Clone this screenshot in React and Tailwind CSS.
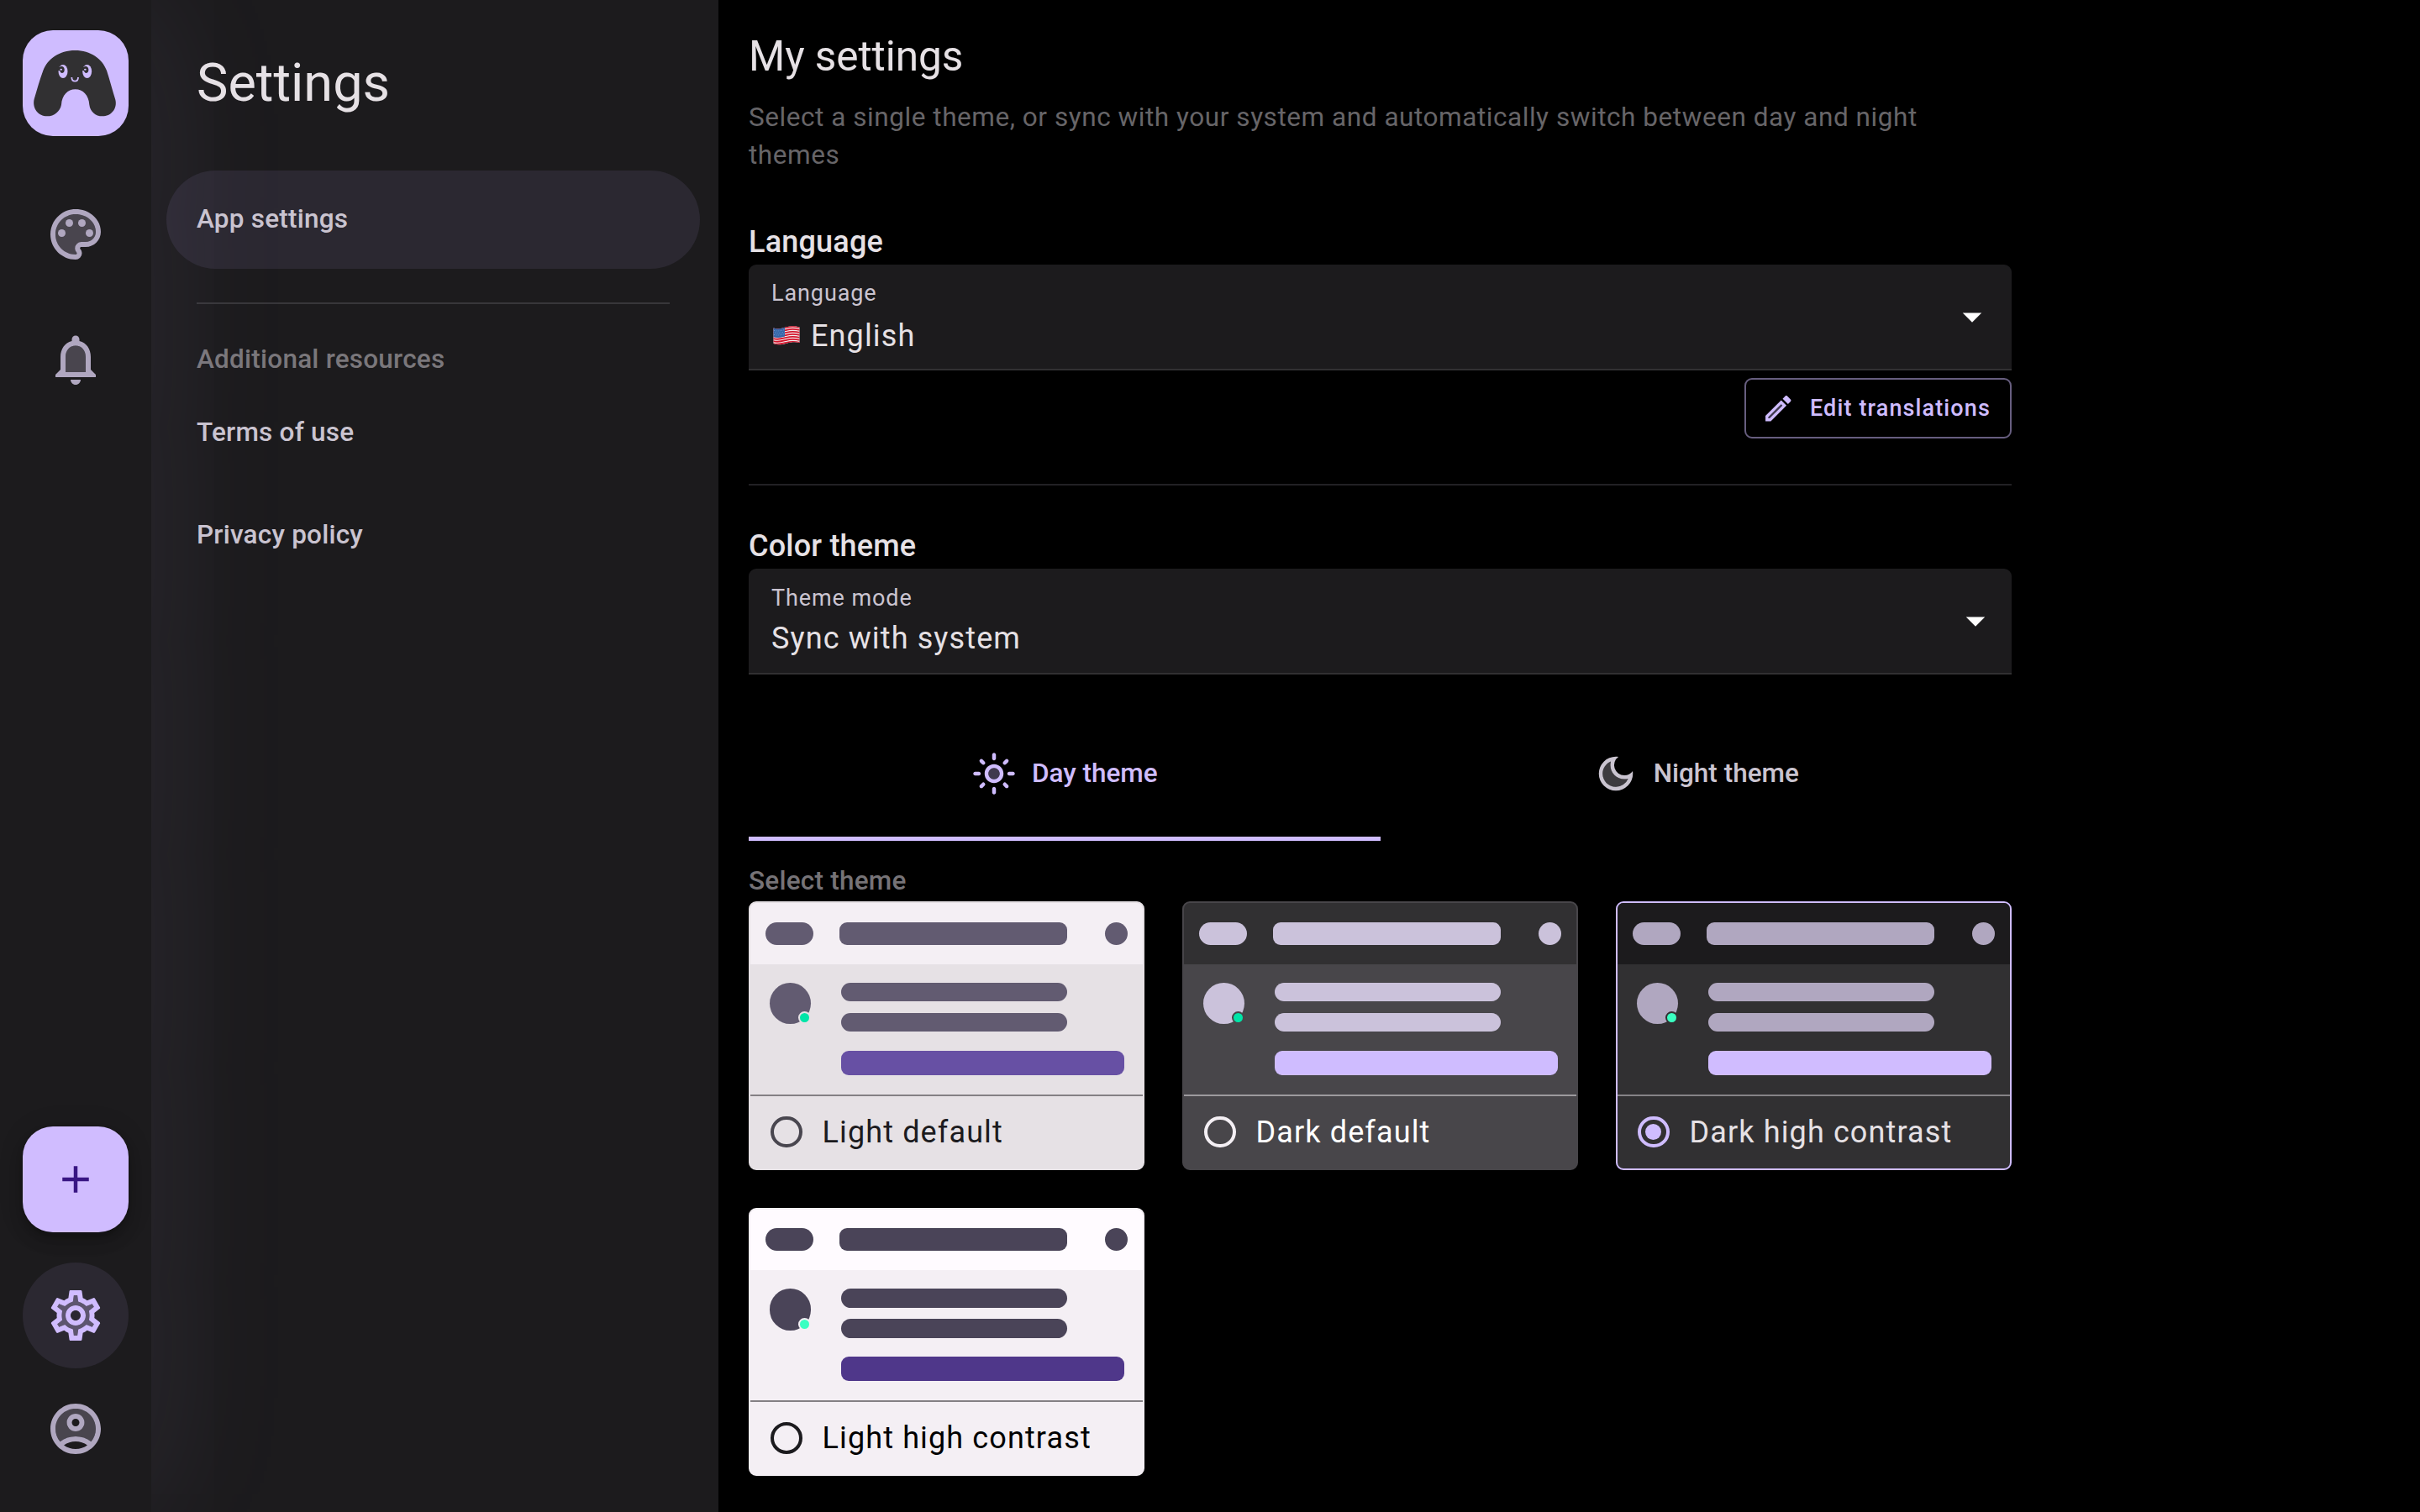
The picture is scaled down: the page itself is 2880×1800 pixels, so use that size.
import React from 'react';
import clsx from 'clsx';
import {
  MdOutlinePalette,
  MdOutlineNotifications,
  MdOutlineSettings,
  MdOutlineAccountCircle,
  MdOutlineLightMode,
  MdOutlineDarkMode,
  MdOutlineEdit,
  MdAdd,
  MdArrowDropDown,
} from 'react-icons/md';

// tinted inner layers drawn under the outlined icons
const tints = {
  palette:
    'M12 4c-4.41 0-8 3.59-8 8s3.59 8 8 8c.28 0 .5-.22.5-.5 0-.16-.08-.28-.14-.35-.41-.46-.63-1.05-.63-1.65 0-1.38 1.12-2.5 2.5-2.5H16c2.21 0 4-1.79 4-4 0-3.86-3.59-7-8-7z',
  bell: 'M12 6.5c-2.49 0-4 2.02-4 4.5v6h8v-6c0-2.48-1.51-4.5-4-4.5z',
  gear: 'M19.28 8.6l-.7-1.21-1.27.51-1.06.43-.91-.7c-.39-.3-.8-.54-1.23-.71l-1.06-.43-.16-1.13L12.7 4h-1.4l-.19 1.35-.16 1.13-1.06.44c-.41.17-.82.41-1.25.73l-.9.68-1.05-.42-1.27-.52-.7 1.21 1.08.84.89.7-.14 1.13c-.03.3-.05.53-.05.73s.02.43.05.73l.14 1.13-.89.7-1.08.84.7 1.21 1.27-.51 1.06-.43.91.7c.39.3.8.54 1.23.71l1.06.43.16 1.13.19 1.36h1.39l.19-1.35.16-1.13 1.06-.43c.41-.17.82-.41 1.25-.73l.9-.68 1.04.42 1.27.51.7-1.21-1.08-.84-.89-.7.14-1.13c.04-.31.05-.52.05-.73 0-.21-.02-.43-.05-.73l-.14-1.13.89-.7 1.1-.84zM12 16c-2.21 0-4-1.79-4-4s1.79-4 4-4 4 1.79 4 4-1.79 4-4 4z',
  account:
    'M5.86 17.12C4.7 15.73 4 13.95 4 12c0-4.42 3.58-8 8-8s8 3.58 8 8c0 1.95-.7 3.73-1.86 5.12C16.45 15.8 14.32 15 12 15s-4.45.8-6.14 2.12zM12 6a3.5 3.5 0 1 0 0 7 3.5 3.5 0 0 0 0-7z',
  sun: 'M12 9a3 3 0 1 0 0 6 3 3 0 0 0 0-6z',
  moon: 'M9.37 5.51A7.35 7.35 0 0 0 9.1 7.5c0 4.08 3.32 7.4 7.4 7.4.68 0 1.35-.09 1.99-.27A7.014 7.014 0 0 1 12 19c-3.86 0-7-3.14-7-7 0-2.93 1.81-5.45 4.37-6.49z',
  pencil: 'M5 18.08V19h.92l9.06-9.06-.92-.92z',
};

const themes = [
  {
    name: 'Light default',
    card: 'bg-[#e6e1e5] border-[#e6e1e5]',
    header: 'bg-[#f4eff4]',
    shape: 'bg-[#625b71]',
    accent: 'bg-[#6750a4]',
    dot: 'bg-[#00e5a8] border-[#e6e1e5]',
    line: 'border-[#848084]',
    radio: 'border-[#49464f]',
    text: 'text-[#1c1b1e]',
  },
  {
    name: 'Dark default',
    card: 'bg-[#48464a] border-[#48464a]',
    header: 'bg-[#313032]',
    shape: 'bg-[#cbc2db]',
    accent: 'bg-[#cfbcff]',
    dot: 'bg-[#00e5a8] border-[#48464a]',
    line: 'border-[#9d9a9e]',
    radio: 'border-[#f4eff4]',
    text: 'text-white',
  },
  {
    name: 'Dark high contrast',
    selected: true,
    card: 'bg-[#313032] border-[#cfbcff]',
    header: 'bg-[#1c1b1d]',
    shape: 'bg-[#b0a7c0]',
    accent: 'bg-[#d0bcff]',
    dot: 'bg-[#3affc2] border-[#313032]',
    line: 'border-[#868387]',
    radio: 'border-[#cfbcff]',
    text: 'text-[#e6e1e5]',
  },
  {
    name: 'Light high contrast',
    card: 'bg-[#f4eff4] border-[#f4eff4]',
    header: 'bg-[#fffbff]',
    shape: 'bg-[#4a4458]',
    accent: 'bg-[#4f378a]',
    dot: 'bg-[#3affc2] border-[#f4eff4]',
    line: 'border-[#848084]',
    radio: 'border-[#1c1b1e]',
    text: 'text-black',
  },
];

function TwoTone({ icon: Icon, tint, className }) {
  return (
    <span className={clsx('relative block shrink-0', className)}>
      <svg viewBox="0 0 24 24" className="absolute inset-0 size-full" fill="currentColor" fillRule="evenodd" opacity="0.3">
        <path d={tints[tint]} />
      </svg>
      <Icon className="relative size-full" />
    </span>
  );
}

function Eye({ x }) {
  return (
    <g transform={`translate(${x} 165)`}>
      <ellipse rx="16.500" ry="24" fill="#cfbcff" />
      <path d="M-20-13l11-4c8-3 13 2 14 9 1 8-2 14-8 14-5 0-7-5-9-8l-8-2z" fill="#313032" />
      <ellipse cx="-7" cy="-7" rx="4" ry="3" fill="#cfbcff" />
    </g>
  );
}

function Logo() {
  return (
    <svg viewBox="21 18 378 378" className="size-full">
      <path
        fill="#313032"
        d="M94 162C110 120 152 90 208 90s97 30 113 72c11 34 20 70 31 104 8 34-17 59-46 59-26 0-44-17-47-41-2-34-23-55-50-55s-48 21-50 55c-5 24-25 41-51 41-30 0-54-27-46-61 10-34 20-69 32-102z"
      />
      <Eye x={165} />
      <Eye x={251} />
      <path d="M196 186c0 8 4 14 11.500 14s11.500-6 11.500-14" fill="none" stroke="#cfbcff" strokeWidth="5.500" />
    </svg>
  );
}

function Flag() {
  return (
    <svg viewBox="0 0 32 23" className="h-[23px] w-8">
      <defs>
        <clipPath id="wave">
          <path d="M.5 2.500C6 4.500 10 3 16 1.300S27 .2 31.500 1.500v18.500C27 18.700 22 19 16 20.700S5 23 .5 21z" />
        </clipPath>
      </defs>
      <g clipPath="url(#wave)">
        <rect width="32" height="23" fill="#f3eeee" />
        <g fill="none" stroke="#d4142c" strokeWidth="1.800">
          <path d="M0 3c6 2 10 .5 16-1.200S27 .7 32 2" />
          <path d="M0 6c6 2 10 .5 16-1.200S27 3.700 32 5" />
          <path d="M0 9c6 2 10 .5 16-1.200S27 6.700 32 8" />
          <path d="M0 12c6 2 10 .5 16-1.200S27 9.700 32 11" />
          <path d="M0 15c6 2 10 .5 16-1.200S27 12.700 32 14" />
          <path d="M0 18c6 2 10 .5 16-1.200S27 15.700 32 17" />
          <path d="M0 21c6 2 10 .5 16-1.200S27 18.700 32 20" />
        </g>
        <path d="M0 0h14v12.500c-5 1.500-9 2-14 .5z" fill="#3465a8" />
        <g fill="none" stroke="#8fb0da" strokeWidth="0.700" strokeDasharray="1 1.300">
          <path d="M1 5.500c5 1 8 .3 13-1" />
          <path d="M2 8c5 1 8 .3 12-1" />
          <path d="M1 10.500c5 1 8 .3 13-1" />
        </g>
      </g>
    </svg>
  );
}

function Rail() {
  return (
    <nav className="relative z-10 flex w-[180px] shrink-0 flex-col items-center bg-[#1c1b1d] pt-9 pb-[63px] text-[#b0a7c0] shadow-[0_0_180px_rgba(207,188,255,0.1)]">
      <div className="size-[126px] overflow-hidden rounded-[36px] bg-[#cfbcff]">
        <Logo />
      </div>
      <TwoTone icon={MdOutlinePalette} tint="palette" className="mt-[81px] size-18" />
      <TwoTone icon={MdOutlineNotifications} tint="bell" className="mt-[76.500px] size-18" />
      <button className="mt-auto flex size-[126px] items-center justify-center rounded-[36px] bg-[#d0bcff] text-[#381583] shadow-[0_7px_11px_-2px_rgba(0,0,0,0.2),0_11px_18px_rgba(0,0,0,0.12),0_2px_32px_rgba(0,0,0,0.1)]">
        <MdAdd className="size-[54px]" />
      </button>
      <div className="mt-9 flex size-[126px] items-center justify-center rounded-full bg-[#2b2831] text-[#d0bcff]">
        <TwoTone icon={MdOutlineSettings} tint="gear" className="size-18" />
      </div>
      <TwoTone icon={MdOutlineAccountCircle} tint="account" className="mt-9 size-18" />
    </nav>
  );
}

function Sidebar() {
  return (
    <aside className="w-[675px] shrink-0 bg-[#1c1b1d] pr-[22.500px] pl-[18px] text-[31.500px] font-medium tracking-[0.225px] text-[#cac4d0]">
      <h1 className="pt-[58px] pl-9 text-[63px]/[81px] font-normal tracking-normal text-[#e6e1e5]">Settings</h1>
      <div className="mt-[63.500px] flex h-[117px] items-center rounded-full bg-[#2b2831] pl-9">App settings</div>
      <hr className="mx-9 mt-[40.500px] border-t-2 border-[#38373a]" />
      <div className="mt-[43px] pl-9 leading-[45px] text-[#7a777b]">Additional resources</div>
      <div className="flex h-[130px] items-center pl-9">Terms of use</div>
      <div className="flex h-[113px] items-center pl-9">Privacy policy</div>
    </aside>
  );
}

function SelectField({ label, children, arrowClass }) {
  return (
    <div className="flex h-[126px] items-center rounded-t-[9px] border-b-[2.250px] border-[#313032] bg-[#1c1b1d] pl-[27px]">
      <div className="flex-1 pt-[3px]">
        <div className="text-[27px]/[36px] tracking-[0.9px] text-[#cac4d0]">{label}</div>
        <div className="mt-[3px] flex items-center text-4xl/[54px] tracking-[1.125px] text-[#e6e1e5]">{children}</div>
      </div>
      <MdArrowDropDown className={clsx('size-[54px] text-white', arrowClass)} />
    </div>
  );
}

function Tab({ icon, tint, label, active }) {
  return (
    <div
      className={clsx(
        'flex h-[162px] flex-1 items-center justify-center gap-[18px] border-b-[5px] pt-[7px] text-[31.500px] font-medium',
        active ? 'border-[#cfbcff] text-[#cfbcff]' : 'border-transparent text-[#cac4d0]'
      )}
    >
      <TwoTone icon={icon} tint={tint} className="size-[54px]" />
      {label}
    </div>
  );
}

function ThemeCard({ theme }) {
  return (
    <div className={clsx('h-[319.500px] overflow-hidden rounded-[9px] border-[2.250px]', theme.card)}>
      <div className={clsx('flex h-[72.500px] items-center px-[18px]', theme.header)}>
        <div className={clsx('h-[27px] w-[56.500px] rounded-full', theme.shape)} />
        <div className={clsx('ml-[31.500px] h-[27px] w-[270.500px] rounded-[9px]', theme.shape)} />
        <div className={clsx('ml-auto size-[27px] rounded-full', theme.shape)} />
      </div>
      <div className={clsx('flex h-[157px] gap-9 border-b-2 pt-[22px] pr-[22.500px] pl-[22.500px]', theme.line)}>
        <div className={clsx('relative size-[49.500px] rounded-full', theme.shape)}>
          <div className={clsx('absolute right-0 bottom-0 size-[15px] rounded-full border-[2.250px]', theme.dot)} />
        </div>
        <div className="flex-1">
          <div className={clsx('h-[22.500px] w-[269px] rounded-full', theme.shape)} />
          <div className={clsx('mt-[13.500px] h-[22.500px] w-[269px] rounded-full', theme.shape)} />
          <div className={clsx('mt-[22.500px] h-[29.250px] rounded-[9px]', theme.accent)} />
        </div>
      </div>
      <div className="flex h-[86px] items-center gap-6 pl-6">
        <span className={clsx('flex size-[37.500px] items-center justify-center rounded-full border-[4px]', theme.radio)}>
          {theme.selected && <span className="size-[19px] rounded-full bg-[#cfbcff]" />}
        </span>
        <span className={clsx('text-4xl tracking-[1.125px]', theme.text)}>{theme.name}</span>
      </div>
    </div>
  );
}

export default function App() {
  return (
    <div className="flex h-[1800px] w-[2880px] overflow-hidden bg-black font-['Roboto',sans-serif]">
      <Rail />
      <Sidebar />
      <main className="w-[1539px] pl-9 text-[#e6e1e5]">
        <h2 className="pt-9 text-[49.500px]/[63px] tracking-[-0.05px]">My settings</h2>
        <p className="mt-[18px] text-[31.500px]/[45px] tracking-[0.55px] text-[#676568]">
          Select a single theme, or sync with your system and automatically switch between day and night themes
        </p>

        <h3 className="mt-[54px] text-4xl/[54px] font-medium tracking-[0.2px]">Language</h3>
        <SelectField label="Language" arrowClass="mr-5">
          <span className="pt-[3px] pr-[13px] pl-[2px]"><Flag /></span>
          <span className="pt-[3px]">English</span>
        </SelectField>
        <div className="mt-[9px] flex justify-end">
          <button className="flex h-[72px] items-center gap-[17px] rounded-[9px] border-[2.250px] border-[#675e7f] pr-[23px] pl-[18px] text-[27px] font-medium tracking-[1.125px] text-[#cfbcff]">
            <TwoTone icon={MdOutlineEdit} tint="pencil" className="size-[40.500px]" />
            Edit translations
          </button>
        </div>
        <hr className="mt-[54px] border-t-2 border-[#222124]" />

        <h3 className="mt-[45px] text-4xl/[54px] font-medium tracking-[0.2px]">Color theme</h3>
        <SelectField label="Theme mode" arrowClass="mr-4">
          Sync with system
        </SelectField>

        <div className="mt-9 flex">
          <Tab icon={MdOutlineLightMode} tint="sun" label="Day theme" active />
          <Tab icon={MdOutlineDarkMode} tint="moon" label="Night theme" />
        </div>

        <div className="mt-[25px] text-[31.500px]/[45px] font-medium tracking-[0.225px] text-[#767377]">Select theme</div>
        <div className="mt-[2px] grid grid-cols-3 gap-[45px]">
          {themes.map((theme) => (
            <ThemeCard key={theme.name} theme={theme} />
          ))}
        </div>
      </main>
    </div>
  );
}
